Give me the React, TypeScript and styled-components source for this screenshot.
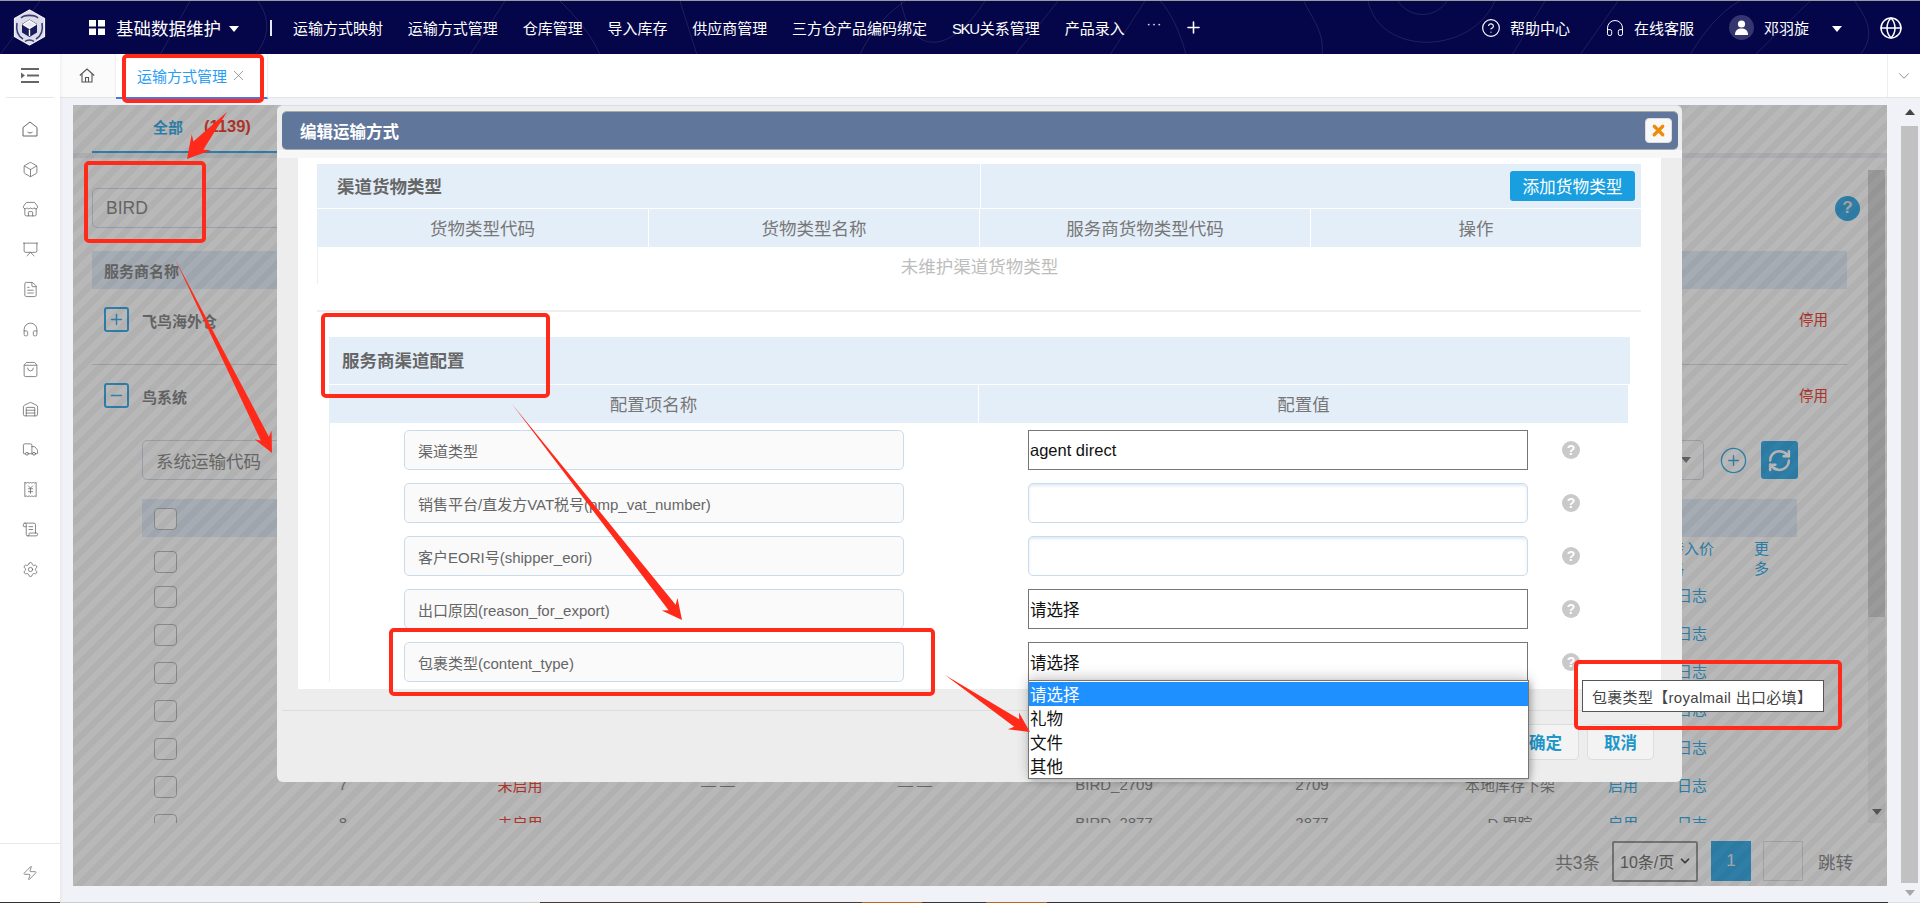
import React from 'react';
import styled, { createGlobalStyle } from 'styled-components';
import {
  Box, Store, Presentation, FileText, Headphones, ShoppingBag, Warehouse, Truck,
  ReceiptJapaneseYen, ScrollText, Settings, Zap, CircleHelp, Globe, X, ChevronDown,
  Plus, Minus, CirclePlus, RefreshCw,
} from 'lucide-react';

const GlobalStyle = createGlobalStyle`
  html, body { margin: 0; padding: 0; background: #fff; }
  * { box-sizing: border-box; }
  body { font-family: "Liberation Sans", "Noto Sans CJK SC", sans-serif; }
`;

const Root = styled.div`
  position: relative; width: 1920px; height: 903px; overflow: hidden;
  display: flex; flex-direction: column; background: #f0f2f7;
`;

/* ---------- top bar ---------- */
const TopBar = styled.header`
  position: relative; flex: 0 0 54px; display: flex; align-items: center;
  background: #05064a; border-top: 1px solid #9a9a9a; color: #fff; overflow: hidden;
`;
const Contours = styled.svg`
  position: absolute; left: 0; top: 0; pointer-events: none;
  path { fill: none; stroke: rgba(255,255,255,.1); stroke-width: 1; }
`;
const LogoMark = styled.svg` position: relative; margin-left: 13px; flex: none; `;
const GridMark = styled.svg` position: relative; margin-left: 43px; flex: none; `;
const AppTitle = styled.span`
  position: relative; margin-left: 11px; font-size: 17.5px; white-space: nowrap;
`;
const Caret = styled.i<{ $ml: number; $size?: number }>`
  position: relative; display: block; flex: none; margin-left: ${p => p.$ml}px; margin-top: 3px;
  width: 0; height: 0;
  border-left: ${p => p.$size ?? 5}px solid transparent;
  border-right: ${p => p.$size ?? 5}px solid transparent;
  border-top: ${p => p.$size ?? 6}px solid #fff;
`;
const NavDivider = styled.i`
  display: block; flex: none; margin-left: 31px; width: 2px; height: 16px; background: #e8e8f2;
`;
const Nav = styled.nav`
  position: relative; display: flex; align-items: center; gap: 24.8px; margin-left: 21px; font-size: 15px;
  white-space: nowrap;
`;
const NavLatin = styled.span` letter-spacing: -1.3px; margin-right: 1px; `;
const NavMore = styled.span` font-size: 13px; margin-top: -8px; letter-spacing: 1px; margin-left: -3px; `;
const NavPlus = styled.span` display: flex; margin-left: -3px; `;
const TopRight = styled.div`
  position: relative; margin-left: auto; padding-right: 17px; display: flex; align-items: center;
  font-size: 15px; white-space: nowrap;
`;
const TopLink = styled.span<{ $ml: number }>`
  display: flex; align-items: center; gap: 9px; margin-left: ${p => p.$ml}px;
`;
const Avatar = styled.span`
  display: flex; align-items: center; justify-content: center; margin-right: 1px;
  width: 25px; height: 25px; border-radius: 50%; background: #35366f;
`;
const GlobeWrap = styled.span` display: flex; margin-left: 37px; `;

/* ---------- shell ---------- */
const Shell = styled.div` flex: 1; display: flex; min-height: 0; `;
const Sidebar = styled.aside`
  flex: 0 0 60px; display: flex; flex-direction: column; background: #fff;
  box-shadow: 1px 0 3px rgba(0,0,0,.06); z-index: 1;
`;
const SideToggle = styled.div`
  flex: 0 0 44px; margin: 0 6px; display: flex; align-items: center; justify-content: center;
  border-bottom: 1px solid #e6e6e6;
`;
const SideList = styled.div`
  flex: 1; padding-top: 11px; display: flex; flex-direction: column; align-items: center; color: #666;
`;
const SideItem = styled.span` flex: 0 0 40px; display: flex; align-items: center; justify-content: center; `;
const SideFoot = styled.div`
  flex: 0 0 59px; border-top: 1px solid #e8e8e8; display: flex; align-items: center; justify-content: center; color: #666;
`;
const Main = styled.main` flex: 1; min-width: 0; display: flex; flex-direction: column; `;
const TabBar = styled.div`
  flex: 0 0 44px; height: 44px; display: flex; background: #fff; border-bottom: 1px solid #e4e4e4;
`;
const HomeCell = styled.div`
  flex: 0 0 56px; display: flex; align-items: center; justify-content: center; padding-right: 1px;
  background: #fbfbfb; border-right: 1px solid #eee; color: #666;
`;
const ActiveTab = styled.div`
  flex: 0 0 152px; height: 45px; display: flex; align-items: center; padding-left: 21px; gap: 3px;
  border-right: 1px solid #eee; border-bottom: 2px solid #4a78e0; color: #2a9df4; font-size: 15px; white-space: nowrap;
`;
const TabFill = styled.div` flex: 1; `;
const TabMenu = styled.div`
  flex: 0 0 33px; display: flex; align-items: center; justify-content: center; border-left: 1px solid #eee; color: #666;
`;
const Workspace = styled.div` flex: 1; min-height: 0; display: flex; `;
const Stage = styled.div` flex: 1; min-width: 0; padding: 7px 0 16px 13px; display: flex; `;
const Gutter = styled.div`
  flex: 0 0 33px; padding-left: 14px; display: flex; flex-direction: column; align-items: stretch;
`;
const GutterBtn = styled.div<{ $h: number }>`
  flex: 0 0 ${p => p.$h}px; width: 17px; display: flex; align-items: center; justify-content: center;
`;
const TriUp = styled.i`
  display: block; width: 0; height: 0; border-left: 5px solid transparent; border-right: 5px solid transparent;
  border-bottom: 6px solid #444;
`;
const TriDown = styled.i<{ $c?: string }>`
  display: block; width: 0; height: 0; border-left: 5px solid transparent; border-right: 5px solid transparent;
  border-top: 6px solid ${p => p.$c ?? '#a8a8a8'};
`;
const GutterThumb = styled.div` flex: 0 0 757px; width: 17px; background: #c1c1c1; `;

/* ---------- dimmed page ---------- */
const Panel = styled.section`
  position: relative; flex: 1; min-width: 0; background: #fff; display: flex; flex-direction: column; overflow: hidden;
`;
const Hatch = styled.div`
  position: absolute; inset: 0; pointer-events: none;
  background: repeating-linear-gradient(135deg, rgba(0,0,0,.28) 0 6.5px, rgba(0,0,0,.305) 6.5px 13px);
`;
const PageTabs = styled.div` flex: 0 0 48px; display: flex; padding-left: 19px; `;
const PageTab = styled.div`
  flex: 0 0 185px; display: flex; align-items: center; padding: 0 0 4px 61px; gap: 21px;
  border-bottom: 2px solid #40afe9; color: #40afe9; font-size: 15px; font-weight: 700;
`;
const Count = styled.span` color: #f04a3a; font-size: 16.5px; font-weight: 700; `;
const PageBand = styled.div` flex: 0 0 5px; background: #eef0f5; `;
const PageBody = styled.div` flex: 0 0 665px; height: 665px; min-height: 0; display: flex; overflow: hidden; `;
const PageColumn = styled.div` flex: 1; min-width: 0; padding: 30px 21px 0 19px; overflow: hidden; `;
const PageScroll = styled.div`
  flex: 0 0 17px; margin: 12px 2px 0 0; display: flex; flex-direction: column; align-items: center; background: #f4f4f4;
`;
const PageThumb = styled.div` flex: 0 0 447px; width: 100%; background: #d6d6d6; `;
const PageScrollEnd = styled.div` margin-top: auto; padding-bottom: 8px; `;
const SearchRow = styled.div` display: flex; justify-content: space-between; align-items: center; margin-right: -13px; height: 40px; `;
const FieldBox = styled.div<{ $w: number; $size?: number }>`
  width: ${p => p.$w}px; height: 40px; display: flex; align-items: center; padding-left: 13px;
  border: 1px solid #d4dde8; border-radius: 5px; background: #fff; color: #8e8e8e; font-size: ${p => p.$size ?? 17.5}px;
`;
const HelpDot = styled.span`
  width: 25px; height: 25px; border-radius: 50%; background: #40afe9; color: #e6e6e6;
  display: flex; align-items: center; justify-content: center; font-size: 17px; font-weight: 700;
`;
const VendorHead = styled.div`
  margin-top: 23px; height: 38px; display: flex; align-items: center; padding-left: 12px;
  background: #e4eef9; color: #8a8a8a; font-size: 15px; font-weight: 700;
`;
const VendorRow = styled.div<{ $line?: boolean }>`
  height: ${p => (p.$line ? 76 : 75)}px; padding: 18px 19px 0 12px; display: flex; align-items: flex-start;
  ${p => (p.$line ? 'border-bottom: 1px solid #ddd;' : '')}
`;
const ExpandBox = styled.span`
  flex: none; width: 25px; height: 25px; border: 2px solid #40afe9; border-radius: 3px; color: #40afe9;
  display: flex; align-items: center; justify-content: center;
`;
const VendorName = styled.span` margin: 5px 0 0 13px; color: #8a8a8a; font-size: 15px; font-weight: 700; line-height: 20px; `;
const StopLink = styled.span` margin: 3px 0 0 auto; color: #f04a3a; font-size: 14.5px; line-height: 20px; `;
const ChannelFilter = styled.div` margin-left: 50px; display: flex; align-items: center; height: 40px; `;
const ChannelField = styled(FieldBox)` padding-right: 12px; justify-content: space-between; `;
const RoundAdd = styled.span` margin-left: 15px; color: #40afe9; display: flex; `;
const RefreshBtn = styled.span`
  margin-left: 13px; width: 37px; height: 38px; border-radius: 3px; background: #40afe9; color: #fff;
  display: flex; align-items: center; justify-content: center;
`;
const DataTable = styled.div` margin: 19px 50px 0 50px; `;
const DataGrid = styled.div<{ $head?: boolean }>`
  display: grid; align-items: center; height: 38px; font-size: 15px; color: #8e8e8e; text-align: center;
  grid-template-columns: 134px 134px 220px 176px 218px 180px 216px 180px 46px 92px 48px 1fr;
  ${p => (p.$head ? 'background: #e4eef9; margin-bottom: 2px;' : '')}
  > span { padding-bottom: 3px; }
`;
const Tick = styled.span`
  display: block; width: 23px; height: 22px; margin: 2px 0 0 12px; border: 1px solid #bdbdbd; border-radius: 4px; background: #fff;
`;
const Warn = styled.span` color: #f04a3a; `;
const LinkCell = styled.span` color: #40afe9; `;
const WrapHead = styled.span<{ $w: number }>`
  justify-self: center; width: ${p => p.$w}px; color: #40afe9; line-height: 20px; text-align: left; word-break: break-all;
`;
const Pager = styled.div`
  flex: 1; min-height: 0; display: flex; align-items: center; justify-content: flex-end; gap: 12px; padding: 13px 34px 0 0;
  color: #8e8e8e; font-size: 17.5px; white-space: nowrap;
`;
const PageSize = styled.div`
  width: 86px; height: 41px; margin-right: 1px; display: flex; align-items: center; justify-content: space-between; padding: 0 4px 0 6px;
  border: 2px solid #9f9f9f; border-radius: 2px; color: #777; font-size: 16px;
`;
const PageNo = styled.span<{ $on?: boolean }>`
  width: 40px; height: 40px; display: flex; align-items: center; justify-content: center; font-size: 17px;
  background: ${p => (p.$on ? '#40afe9' : 'transparent')}; color: #e8e8e8;
  border: ${p => (p.$on ? 'none' : '1px solid #e0e0e0')};
`;
const PagerJump = styled.span` margin-left: 3px; `;

/* ---------- modal ---------- */
const Modal = styled.div`
  position: absolute; left: 277px; top: 105px; width: 1405px; height: 677px; z-index: 2;
  display: flex; flex-direction: column; background: #ededed; border-radius: 6px; border-top: 1px solid #ddd;
`;
const ModalHead = styled.div`
  flex: 0 0 39px; margin: 5px 4px 0 5px; display: flex; align-items: center; justify-content: space-between; padding: 0 6px 0 18px;
  background: #60779b; border-top: 1px solid #aaa; border-bottom: 1px solid #aaa; border-radius: 5px;
  color: #fff; font-size: 16.5px; font-weight: 700;
`;
const CloseBtn = styled.span`
  width: 27px; height: 25px; display: flex; align-items: center; justify-content: center;
  background: #f8f8f8; border: 1px solid #ddd; border-radius: 4px; color: #ee8c0a;
`;
const ModalBand = styled.div` flex: 0 0 8px; background: #f7f7f7; `;
const ModalBody = styled.div`
  flex: 0 0 531px; margin: 0 21px; padding: 6px 20px 0 19px; background: #fff; overflow: hidden;
`;
const BandRow = styled.div`
  height: 45px; display: grid; grid-template-columns: 663px 1fr; background: #e4eef9; border-bottom: 1px solid #fff;
`;
const BandTitle = styled.div`
  display: flex; align-items: center; padding: 0 0 2px 20px; color: #666; font-size: 17.5px; font-weight: 700;
`;
const BandAction = styled.div`
  display: flex; align-items: center; justify-content: flex-end; padding: 0 6px 1px 0; border-left: 1px solid #fff;
`;
const AddBtn = styled.span`
  width: 125px; height: 30px; display: flex; align-items: center; justify-content: center; border-radius: 3px;
  background: #199fdf; color: #fff; font-size: 16.7px;
`;
const ColumnRow = styled.div<{ $cols: string; $trim?: number }>`
  display: grid; grid-template-columns: ${p => p.$cols}; height: 38px; background: #e4eef9;
  margin-right: ${p => p.$trim ?? 0}px;
`;
const ColumnCell = styled.div`
  display: flex; align-items: center; justify-content: center; color: #777; font-size: 17.5px;
  padding-bottom: 1px;
  & + & { border-left: 1px solid #fff; }
`;
const EmptyRow = styled.div`
  height: 38px; margin-top: -1px; display: flex; align-items: center; justify-content: center; color: #bdbdbd; font-size: 17.5px;
  border-left: 1px solid #e8eff7;
`;
const SectionRule = styled.div` height: 2px; margin-top: 26px; background: #eee; `;
const ConfigSection = styled.div` margin: 25px 11px 0 12px; `;
const ConfigTitle = styled.div`
  height: 48px; display: flex; align-items: center; padding: 0 0 2px 13px; background: #e4eef9; border-bottom: 1px solid #fff;
  color: #666; font-size: 17.5px; font-weight: 700;
`;
const ConfigBody = styled.div` margin-top: 0; padding-top: 7px; border-left: 1px solid #e8eff7; display: flex; flex-direction: column; gap: 13px; `;
const ConfigRow = styled.div`
  display: grid; grid-template-columns: 74px 500px 124px 500px 34px 18px; height: 40px; align-items: center;
`;
const ConfigLabel = styled.div`
  grid-column: 2; height: 40px; display: flex; align-items: center; padding-left: 13px; background: #fafafa;
  border: 1px solid #c9dcee; border-radius: 5px; color: #666; font-size: 15px; white-space: nowrap;
`;
const ValueBox = styled.div`
  grid-column: 4; height: 40px; display: flex; align-items: center; padding-left: 1px; background: #fff;
  border: 1px solid #767676; color: #111; font-size: 16.5px;
`;
const ValueInput = styled.input`
  grid-column: 4; width: 100%; height: 40px; background: #fff; outline: none; padding: 0 4px;
  border: 1px solid #c9dcee; border-radius: 5px; box-shadow: inset 0 2px 3px rgba(120,160,200,.22);
`;
const HintIcon = styled.span`
  grid-column: 6; width: 18px; height: 18px; border-radius: 50%; background: #c9c9c9; color: #fff;
  display: flex; align-items: center; justify-content: center; font-size: 14px; font-weight: 700;
`;
const ModalFoot = styled.div`
  margin: 21px 2px 0 5px; border-top: 1px solid #ddd; padding: 13px 26px 0 0; display: flex; justify-content: flex-end; gap: 8px;
`;
const FootBtn = styled.span`
  width: 67px; height: 36px; display: flex; align-items: center; justify-content: center;
  background: #f3f3f3; border: 1px solid #ddd; border-radius: 5px; color: #2196c9; font-size: 16.5px; font-weight: 700;
`;

/* ---------- floating: dropdown, tooltip, annotations ---------- */
const Dropdown = styled.div`
  position: absolute; left: 1028px; top: 680px; width: 501px; height: 99px; z-index: 3; padding-top: 1px;
  background: #fff; border: 1px solid #767676; box-shadow: 0 -3px 12px rgba(0,0,0,.2), 2px 3px 6px rgba(0,0,0,.2);
`;
const DropOption = styled.div<{ $on?: boolean }>`
  height: 24px; display: flex; align-items: center; padding-left: 1px; font-size: 16.5px;
  background: ${p => (p.$on ? '#1e90ff' : '#fff')}; color: ${p => (p.$on ? '#fff' : '#111')};
`;
const Tip = styled.div`
  position: absolute; left: 1582px; top: 680px; width: 242px; height: 32px; z-index: 3;
  display: flex; align-items: center; padding-left: 9px; background: #fff; border: 1px solid #555;
  color: #444; font-size: 15px; letter-spacing: .3px; white-space: nowrap;
`;
const RedFrame = styled.div<{ $x: number; $y: number; $w: number; $h: number }>`
  position: absolute; left: ${p => p.$x}px; top: ${p => p.$y}px; width: ${p => p.$w}px; height: ${p => p.$h}px;
  border: 4px solid #ff2a1a; border-radius: 5px; z-index: 4; pointer-events: none;
`;
const ArrowLayer = styled.svg` position: absolute; left: 0; top: 0; z-index: 5; pointer-events: none; `;
const BottomStrip = styled.div`
  flex: 0 0 1px;
  background: linear-gradient(90deg, #333 0 60px, #ccc 60px 540px, #4a3a30 540px 862px, #b5651d 862px 922px, #334 922px 986px, #b5651d 986px 1047px, #333 1047px 1888px, #ddd 1888px);
`;

type P = [number, number];
function arrowPoints(t: P, p: P, h: number, w: number, n: number) {
  const dx = p[0] - t[0], dy = p[1] - t[1];
  const len = Math.hypot(dx, dy), ux = dx / len, uy = dy / len, nx = -uy, ny = ux;
  const at = (d: number, s: number): string => `${p[0] - ux * d + nx * s},${p[1] - uy * d + ny * s}`;
  return [`${t[0]},${t[1]}`, at(h * 0.8, n / 2), at(h, w / 2), `${p[0]},${p[1]}`, at(h, -w / 2), at(h * 0.8, -n / 2)].join(' ');
}

const navItems = ['运输方式映射', '运输方式管理', '仓库管理', '导入库存', '供应商管理', '三方仓产品编码绑定'];
const contours = [
  'M0 54L40 0', 'M160 54L190 0', 'M255 54C275 30 265 10 258 0', 'M470 54L505 0', 'M600 54C590 30 570 10 560 0',
  'M697 54L680 0', 'M901 0C910 55 950 55 985 0', 'M860 54C870 30 890 10 905 0', 'M1015 54L1058 0', 'M1110 54L1145 0',
  'M1186 54C1180 30 1170 10 1160 0', 'M1304 0C1310 15 1325 30 1322 54', 'M1368 0C1380 55 1470 55 1495 0',
  'M1398 0C1410 18 1435 18 1447 0', 'M1512 54L1545 0', 'M1580 54L1618 0', 'M1690 54C1710 20 1730 5 1740 0', 'M1755 54L1810 0', 'M1855 0C1860 10 1880 30 1860 54',
];
const sideIcons = [Box, Store, Presentation, FileText, Headphones, ShoppingBag, Warehouse, Truck, ReceiptJapaneseYen, ScrollText, Settings];
const rows = [
  ['2', 'BIRD_2701', '2701', '本地库存下架'], ['3', 'BIRD_2702', '2702', '本地库存下架'], ['4', 'BIRD_2703', '2703', '本地库存下架'],
  ['5', 'BIRD_2704', '2704', '本地库存下架'], ['6', 'BIRD_2705', '2705', '本地库存下架'], ['7', 'BIRD_2709', '2709', '本地库存下架'],
  ['8', 'BIRD_2877', '2877', 'D 跟踪'],
];
const configRows = [
  { label: '渠道类型', value: 'agent direct' },
  { label: '销售平台/直发方VAT税号(pmp_vat_number)' },
  { label: '客户EORI号(shipper_eori)' },
  { label: '出口原因(reason_for_export)', value: '请选择' },
  { label: '包裹类型(content_type)', value: '请选择' },
];
const frames = [
  { x: 122, y: 54, w: 142, h: 49 }, { x: 84, y: 161, w: 122, h: 82 }, { x: 321, y: 313, w: 229, h: 85 },
  { x: 389, y: 628, w: 546, h: 68 }, { x: 1574, y: 660, w: 268, h: 70 },
];
const arrows: { t: P; p: P; h: number; w: number; n: number }[] = [
  { t: [227, 112], p: [187, 159], h: 22, w: 25, n: 13 },
  { t: [175, 259], p: [272, 453], h: 20, w: 19, n: 9 },
  { t: [512, 404], p: [682, 620], h: 20, w: 20, n: 9 },
  { t: [945, 675], p: [1030, 732], h: 20, w: 20, n: 9 },
];

export default function App() {
  return (
    <Root>
      <GlobalStyle />
      <TopBar>
        <Contours width="1920" height="54" viewBox="0 0 1920 54">
          {contours.map(d => <path key={d} d={d} />)}
        </Contours>
        <LogoMark width="33" height="37" viewBox="0 0 33 37">
          <path d="M16.5 1L31.5 9.5V27.5L16.5 36L1.5 27.5V9.5Z" fill="#dcdcea" stroke="#f2f2f8" strokeWidth="1.2" strokeLinejoin="round" />
          <path d="M8 9C11 5.5 22 5.5 25 9" fill="none" stroke="#3a3b78" strokeWidth="1.6" />
          <path d="M4 14C2.8 21 5 27 10 30" fill="none" stroke="#3a3b78" strokeWidth="1.6" />
          <path d="M29 14C30.2 21 28 27 23 30" fill="none" stroke="#3a3b78" strokeWidth="1.6" />
          <path d="M16.5 10.5L24 15V23.5L16.5 28L9 23.5V15Z" fill="#1a1b5c" />
          <path d="M10 15.5L16.5 19.3L23 15.5L16.5 11.7ZM16.5 20.5V27" fill="#e8e8f2" stroke="#fff" strokeWidth="1.4" strokeLinejoin="round" />
          <path d="M12 32.5C14.5 30.5 18.5 30.5 21 32.5" fill="none" stroke="#3a3b78" strokeWidth="1.6" />
        </LogoMark>
        <GridMark width="16" height="15" viewBox="0 0 16 15" fill="#fff">
          <rect width="7" height="6.5" /><rect x="9" width="7" height="6.5" />
          <rect y="8.5" width="7" height="6.5" /><rect x="9" y="8.5" width="7" height="6.5" />
        </GridMark>
        <AppTitle>基础数据维护</AppTitle>
        <Caret $ml={8} />
        <NavDivider />
        <Nav>
          {navItems.map(n => <span key={n}>{n}</span>)}
          <span><NavLatin>SKU</NavLatin>关系管理</span>
          <span>产品录入</span>
          <NavMore>···</NavMore>
          <NavPlus><Plus size={19} strokeWidth={2} /></NavPlus>
        </Nav>
        <TopRight>
          <TopLink $ml={0}><CircleHelp size={20} strokeWidth={1.4} />帮助中心</TopLink>
          <TopLink $ml={35}><Headphones size={20} strokeWidth={1.2} />在线客服</TopLink>
          <TopLink $ml={35}>
            <Avatar>
              <svg width="13" height="15" viewBox="0 0 13 15" fill="#fff"><circle cx="6.5" cy="4" r="3.6" /><path d="M0 15C0 10 3 8.5 6.5 8.5S13 10 13 15Z" /></svg>
            </Avatar>
            邓羽旋
          </TopLink>
          <Caret $ml={23} />
          <GlobeWrap><Globe size={24} strokeWidth={1.5} /></GlobeWrap>
        </TopRight>
      </TopBar>

      <Shell>
        <Sidebar>
          <SideToggle>
            <svg width="18" height="15" viewBox="0 0 18 15" fill="#666">
              <rect width="18" height="2" /><rect x="6" y="6.5" width="12" height="2" /><rect y="13" width="18" height="2" />
              <path d="M0 4.5L4 7.5L0 10.5Z" />
            </svg>
          </SideToggle>
          <SideList>
            <SideItem>
              <svg width="16" height="16" viewBox="0 0 16 16" fill="none" stroke="#666" strokeWidth="1">
                <path d="M8 1L15 6.5V15H1V6.5Z" /><path d="M5.5 11C6.5 12.2 9.5 12.2 10.5 11" />
              </svg>
            </SideItem>
            {sideIcons.map((I, i) => <SideItem key={i}><I size={17} strokeWidth={1.1} /></SideItem>)}
          </SideList>
          <SideFoot><Zap size={16} strokeWidth={1.1} /></SideFoot>
        </Sidebar>

        <Main>
          <TabBar>
            <HomeCell>
              <svg width="16" height="15" viewBox="0 0 16 15" fill="none" stroke="#555" strokeWidth="1.1">
                <path d="M0.8 7.5L8 1L15.2 7.5" /><path d="M3 6V14H13V6" /><path d="M6.5 14V9.5H9.5V14" />
              </svg>
            </HomeCell>
            <ActiveTab>运输方式管理<X size={17} strokeWidth={1} color="#777" /></ActiveTab>
            <TabFill />
            <TabMenu><ChevronDown size={18} strokeWidth={1} /></TabMenu>
          </TabBar>
          <Workspace>
            <Stage>
              <Panel>
                <PageTabs><PageTab>全部<Count>(1139)</Count></PageTab></PageTabs>
                <PageBand />
                <PageBody>
                  <PageColumn>
                    <SearchRow>
                      <FieldBox $w={800}>BIRD</FieldBox>
                      <HelpDot>?</HelpDot>
                    </SearchRow>
                    <VendorHead>服务商名称</VendorHead>
                    <VendorRow $line>
                      <ExpandBox><Plus size={17} strokeWidth={2} /></ExpandBox>
                      <VendorName>飞鸟海外仓</VendorName>
                      <StopLink>停用</StopLink>
                    </VendorRow>
                    <VendorRow>
                      <ExpandBox><Minus size={17} strokeWidth={2} /></ExpandBox>
                      <VendorName>鸟系统</VendorName>
                      <StopLink>停用</StopLink>
                    </VendorRow>
                    <ChannelFilter>
                      <ChannelField $w={1562}>系统运输代码<TriDown $c="#888" /></ChannelField>
                      <RoundAdd><CirclePlus size={29} strokeWidth={1.1} /></RoundAdd>
                      <RefreshBtn><RefreshCw size={25} strokeWidth={2.4} /></RefreshBtn>
                    </ChannelFilter>
                    <DataTable>
                      <DataGrid $head><Tick /></DataGrid>
                      <DataGrid>
                        <Tick />
                        <span /><span /><span /><span /><span /><span /><span /><span />
                        <WrapHead $w={46}>转入价格</WrapHead>
                        <WrapHead $w={16}>更多</WrapHead>
                      </DataGrid>
                      {rows.map(r => (
                        <DataGrid key={r[0]}>
                          <Tick />
                          <span>{r[0]}</span>
                          <Warn>未启用</Warn>
                          <span>— —</span>
                          <span>— —</span>
                          <span>{r[1]}</span>
                          <span>{r[2]}</span>
                          <span>{r[3]}</span>
                          <LinkCell>启用</LinkCell>
                          <LinkCell>日志</LinkCell>
                        </DataGrid>
                      ))}
                    </DataTable>
                  </PageColumn>
                  <PageScroll>
                    <PageThumb />
                    <PageScrollEnd><TriDown $c="#777" /></PageScrollEnd>
                  </PageScroll>
                </PageBody>
                <Pager>
                  <span>共3条</span>
                  <PageSize>10条/页<ChevronDown size={14} strokeWidth={3} color="#555" /></PageSize>
                  <PageNo $on>1</PageNo>
                  <PageNo />
                  <PagerJump>跳转</PagerJump>
                </Pager>
                <Hatch />
              </Panel>
            </Stage>
            <Gutter>
              <GutterBtn $h={28}><TriUp /></GutterBtn>
              <GutterThumb />
              <GutterBtn $h={19}><TriDown /></GutterBtn>
            </Gutter>
          </Workspace>
        </Main>
      </Shell>
      <BottomStrip />

      <Modal>
        <ModalHead>
          编辑运输方式
          <CloseBtn><X size={17} strokeWidth={4.5} /></CloseBtn>
        </ModalHead>
        <ModalBand />
        <ModalBody>
          <BandRow>
            <BandTitle>渠道货物类型</BandTitle>
            <BandAction><AddBtn>添加货物类型</AddBtn></BandAction>
          </BandRow>
          <ColumnRow $cols="1fr 1fr 1fr 1fr">
            <ColumnCell>货物类型代码</ColumnCell>
            <ColumnCell>货物类型名称</ColumnCell>
            <ColumnCell>服务商货物类型代码</ColumnCell>
            <ColumnCell>操作</ColumnCell>
          </ColumnRow>
          <EmptyRow>未维护渠道货物类型</EmptyRow>
          <SectionRule />
          <ConfigSection>
            <ConfigTitle>服务商渠道配置</ConfigTitle>
            <ColumnRow $cols="649px 1fr" $trim={2}>
              <ColumnCell>配置项名称</ColumnCell>
              <ColumnCell>配置值</ColumnCell>
            </ColumnRow>
            <ConfigBody>
              {configRows.map(r => (
                <ConfigRow key={r.label}>
                  <ConfigLabel>{r.label}</ConfigLabel>
                  {r.value ? <ValueBox>{r.value}</ValueBox> : <ValueInput readOnly />}
                  <HintIcon>?</HintIcon>
                </ConfigRow>
              ))}
            </ConfigBody>
          </ConfigSection>
        </ModalBody>
        <ModalFoot>
          <FootBtn>确定</FootBtn>
          <FootBtn>取消</FootBtn>
        </ModalFoot>
      </Modal>

      <Dropdown>
        <DropOption $on>请选择</DropOption>
        <DropOption>礼物</DropOption>
        <DropOption>文件</DropOption>
        <DropOption>其他</DropOption>
      </Dropdown>
      <Tip>包裹类型【royalmail 出口必填】</Tip>

      {frames.map(f => <RedFrame key={f.x} $x={f.x} $y={f.y} $w={f.w} $h={f.h} />)}
      <ArrowLayer width="1920" height="903" viewBox="0 0 1920 903">
        {arrows.map(a => <polygon key={a.t[0]} points={arrowPoints(a.t, a.p, a.h, a.w, a.n)} fill="#ff2a1a" />)}
      </ArrowLayer>
    </Root>
  );
}
